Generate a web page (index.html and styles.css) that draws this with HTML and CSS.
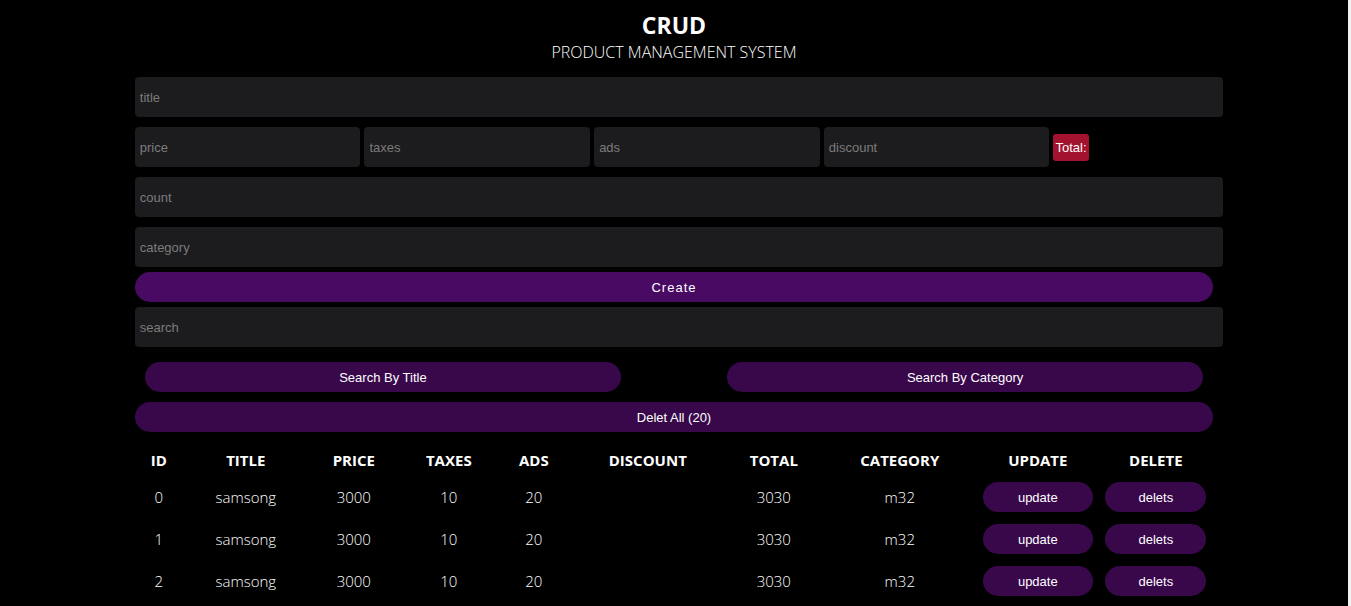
FILE: index.html
```html
<!DOCTYPE html>
<html lang="en">
<head>
<meta charset="UTF-8">
<title>CRUD</title>
<link rel="stylesheet" href="styles.css">
</head>
<body>
<div class="crud">
  <div class="head">
    <h2 class="head-title">CRUD</h2>
    <p class="head-sub">PRODUCT MANAGEMENT SYSTEM</p>
  </div>
  <div class="inputs">
    <input class="field" type="text" placeholder="title">
    <div class="price">
      <input class="field field-price" type="number" placeholder="price"><input class="field field-price gap" type="number" placeholder="taxes"><input class="field field-price gap" type="number" placeholder="ads"><input class="field field-price gap" type="number" placeholder="discount"><small class="total">Total:</small>
    </div>
    <input class="field" type="number" placeholder="count">
    <input class="field" type="text" placeholder="category">
    <button class="btn-create">Create</button>
  </div>
  <div class="outputs">
    <input class="field field-search" type="text" placeholder="search">
    <div class="search-btns">
      <button class="btn-dark btn-search">Search By Title</button>
      <button class="btn-dark btn-search">Search By Category</button>
    </div>
    <button class="btn-dark btn-delall">Delet All (20)</button>
    <table class="tbl">
      <colgroup>
        <col class="c-id"><col class="c-title"><col class="c-price"><col class="c-taxes"><col class="c-ads"><col class="c-discount"><col class="c-total"><col class="c-category"><col class="c-update"><col class="c-delete">
      </colgroup>
      <thead>
        <tr><th>ID</th><th>TITLE</th><th>PRICE</th><th>TAXES</th><th>ADS</th><th>DISCOUNT</th><th>TOTAL</th><th>CATEGORY</th><th>UPDATE</th><th>DELETE</th></tr>
      </thead>
      <tbody>
        <tr><td>0</td><td>samsong</td><td>3000</td><td>10</td><td>20</td><td></td><td>3030</td><td>m32</td><td><button class="btn-dark btn-upd">update</button></td><td><button class="btn-dark btn-del">delets</button></td></tr>
        <tr><td>1</td><td>samsong</td><td>3000</td><td>10</td><td>20</td><td></td><td>3030</td><td>m32</td><td><button class="btn-dark btn-upd">update</button></td><td><button class="btn-dark btn-del">delets</button></td></tr>
        <tr><td>2</td><td>samsong</td><td>3000</td><td>10</td><td>20</td><td></td><td>3030</td><td>m32</td><td><button class="btn-dark btn-upd">update</button></td><td><button class="btn-dark btn-del">delets</button></td></tr>
        <tr><td>3</td><td>samsong</td><td>3000</td><td>10</td><td>20</td><td></td><td>3030</td><td>m32</td><td><button class="btn-dark btn-upd">update</button></td><td><button class="btn-dark btn-del">delets</button></td></tr>
        <tr><td>4</td><td>samsong</td><td>3000</td><td>10</td><td>20</td><td></td><td>3030</td><td>m32</td><td><button class="btn-dark btn-upd">update</button></td><td><button class="btn-dark btn-del">delets</button></td></tr>
        <tr><td>5</td><td>samsong</td><td>3000</td><td>10</td><td>20</td><td></td><td>3030</td><td>m32</td><td><button class="btn-dark btn-upd">update</button></td><td><button class="btn-dark btn-del">delets</button></td></tr>
        <tr><td>6</td><td>samsong</td><td>3000</td><td>10</td><td>20</td><td></td><td>3030</td><td>m32</td><td><button class="btn-dark btn-upd">update</button></td><td><button class="btn-dark btn-del">delets</button></td></tr>
        <tr><td>7</td><td>samsong</td><td>3000</td><td>10</td><td>20</td><td></td><td>3030</td><td>m32</td><td><button class="btn-dark btn-upd">update</button></td><td><button class="btn-dark btn-del">delets</button></td></tr>
        <tr><td>8</td><td>samsong</td><td>3000</td><td>10</td><td>20</td><td></td><td>3030</td><td>m32</td><td><button class="btn-dark btn-upd">update</button></td><td><button class="btn-dark btn-del">delets</button></td></tr>
        <tr><td>9</td><td>samsong</td><td>3000</td><td>10</td><td>20</td><td></td><td>3030</td><td>m32</td><td><button class="btn-dark btn-upd">update</button></td><td><button class="btn-dark btn-del">delets</button></td></tr>
        <tr><td>10</td><td>samsong</td><td>3000</td><td>10</td><td>20</td><td></td><td>3030</td><td>m32</td><td><button class="btn-dark btn-upd">update</button></td><td><button class="btn-dark btn-del">delets</button></td></tr>
        <tr><td>11</td><td>samsong</td><td>3000</td><td>10</td><td>20</td><td></td><td>3030</td><td>m32</td><td><button class="btn-dark btn-upd">update</button></td><td><button class="btn-dark btn-del">delets</button></td></tr>
        <tr><td>12</td><td>samsong</td><td>3000</td><td>10</td><td>20</td><td></td><td>3030</td><td>m32</td><td><button class="btn-dark btn-upd">update</button></td><td><button class="btn-dark btn-del">delets</button></td></tr>
        <tr><td>13</td><td>samsong</td><td>3000</td><td>10</td><td>20</td><td></td><td>3030</td><td>m32</td><td><button class="btn-dark btn-upd">update</button></td><td><button class="btn-dark btn-del">delets</button></td></tr>
        <tr><td>14</td><td>samsong</td><td>3000</td><td>10</td><td>20</td><td></td><td>3030</td><td>m32</td><td><button class="btn-dark btn-upd">update</button></td><td><button class="btn-dark btn-del">delets</button></td></tr>
        <tr><td>15</td><td>samsong</td><td>3000</td><td>10</td><td>20</td><td></td><td>3030</td><td>m32</td><td><button class="btn-dark btn-upd">update</button></td><td><button class="btn-dark btn-del">delets</button></td></tr>
        <tr><td>16</td><td>samsong</td><td>3000</td><td>10</td><td>20</td><td></td><td>3030</td><td>m32</td><td><button class="btn-dark btn-upd">update</button></td><td><button class="btn-dark btn-del">delets</button></td></tr>
        <tr><td>17</td><td>samsong</td><td>3000</td><td>10</td><td>20</td><td></td><td>3030</td><td>m32</td><td><button class="btn-dark btn-upd">update</button></td><td><button class="btn-dark btn-del">delets</button></td></tr>
        <tr><td>18</td><td>samsong</td><td>3000</td><td>10</td><td>20</td><td></td><td>3030</td><td>m32</td><td><button class="btn-dark btn-upd">update</button></td><td><button class="btn-dark btn-del">delets</button></td></tr>
        <tr><td>19</td><td>samsong</td><td>3000</td><td>10</td><td>20</td><td></td><td>3030</td><td>m32</td><td><button class="btn-dark btn-upd">update</button></td><td><button class="btn-dark btn-del">delets</button></td></tr>
      </tbody>
    </table>
  </div>
</div>
</body>
</html>
```

FILE: styles.css
```css
body {
  margin: 0 3px 0 0;
  background: #000;
  color: #fff;
  font-family: "Open Sans", "Noto Sans", sans-serif;
}
body::after {
  content: "";
  position: fixed;
  top: 0;
  right: 0;
  bottom: 0;
  width: 3px;
  background: #f1f1f1;
}
.crud {
  width: 80%;
  margin: 0 auto;
}
.head {
  text-align: center;
  padding-top: 11px;
  padding-bottom: 10px;
}
.head-title {
  margin: 0;
  font-size: 23px;
  line-height: 28px;
  font-weight: 700;
}
.head-sub {
  margin: 3px 0 0;
  font-size: 16px;
  line-height: 20px;
  font-weight: 300;
}
.inputs {
  display: flex;
  flex-direction: column;
}
.field {
  display: block;
  width: 100%;
  height: 30px;
  padding: 5px;
  margin: 5px 0;
  border: 0;
  outline: none;
  border-radius: 4px;
  background: #1c1b1e;
  color: #fff;
  font-family: "Liberation Sans", Arial, sans-serif;
  font-size: 13px;
}
.field::placeholder {
  color: #7c7c7c;
}
.price {
  display: flex;
  align-items: center;
  margin: 5px 0;
}
.field-price {
  display: inline-block;
  width: 20%;
  margin: 0;
  flex: none;
}
.gap {
  margin-left: 4px;
}
.total {
  margin-left: 4px;
  background: #a3132f;
  border-radius: 3px;
  padding: 5px 2px;
  font-family: "Liberation Sans", Arial, sans-serif;
  font-size: 13px;
  line-height: 17px;
  color: #fff;
}
.btn-create {
  display: block;
  width: 100%;
  height: 30px;
  margin: 0;
  border: 0;
  border-radius: 15px;
  background: #480a62;
  color: #fff;
  font-family: "Liberation Sans", Arial, sans-serif;
  font-size: 13px;
  letter-spacing: 1px;
  cursor: pointer;
}
.field-search {
  margin: 5px 0 5px;
}
.btn-dark {
  border: 0;
  height: 30px;
  border-radius: 15px;
  background: #38084b;
  color: #fff;
  font-family: "Liberation Sans", Arial, sans-serif;
  font-size: 13px;
  cursor: pointer;
}
.search-btns {
  display: flex;
  justify-content: space-between;
  padding: 0 10px;
  margin-top: 15px;
}
.btn-search {
  width: 45%;
}
.btn-delall {
  display: block;
  width: 100%;
  margin-top: 10px;
}
.tbl {
  width: 100%;
  table-layout: fixed;
  border-collapse: collapse;
  margin-top: 12px;
  text-align: center;
}
.tbl th {
  height: 32px;
  padding: 0;
  font-size: 15px;
  font-weight: 700;
}
.tbl td {
  height: 42px;
  padding: 0;
  font-size: 15px;
  font-weight: 300;
}
.c-id { width: 48px; }
.c-title { width: 126px; }
.c-price { width: 90px; }
.c-taxes { width: 100px; }
.c-ads { width: 70px; }
.c-discount { width: 158px; }
.c-total { width: 94px; }
.c-category { width: 158px; }
.c-update { width: 118px; }
.c-delete { width: 118px; }
.btn-upd {
  width: 110px;
}
.btn-del {
  width: 101px;
}
```
